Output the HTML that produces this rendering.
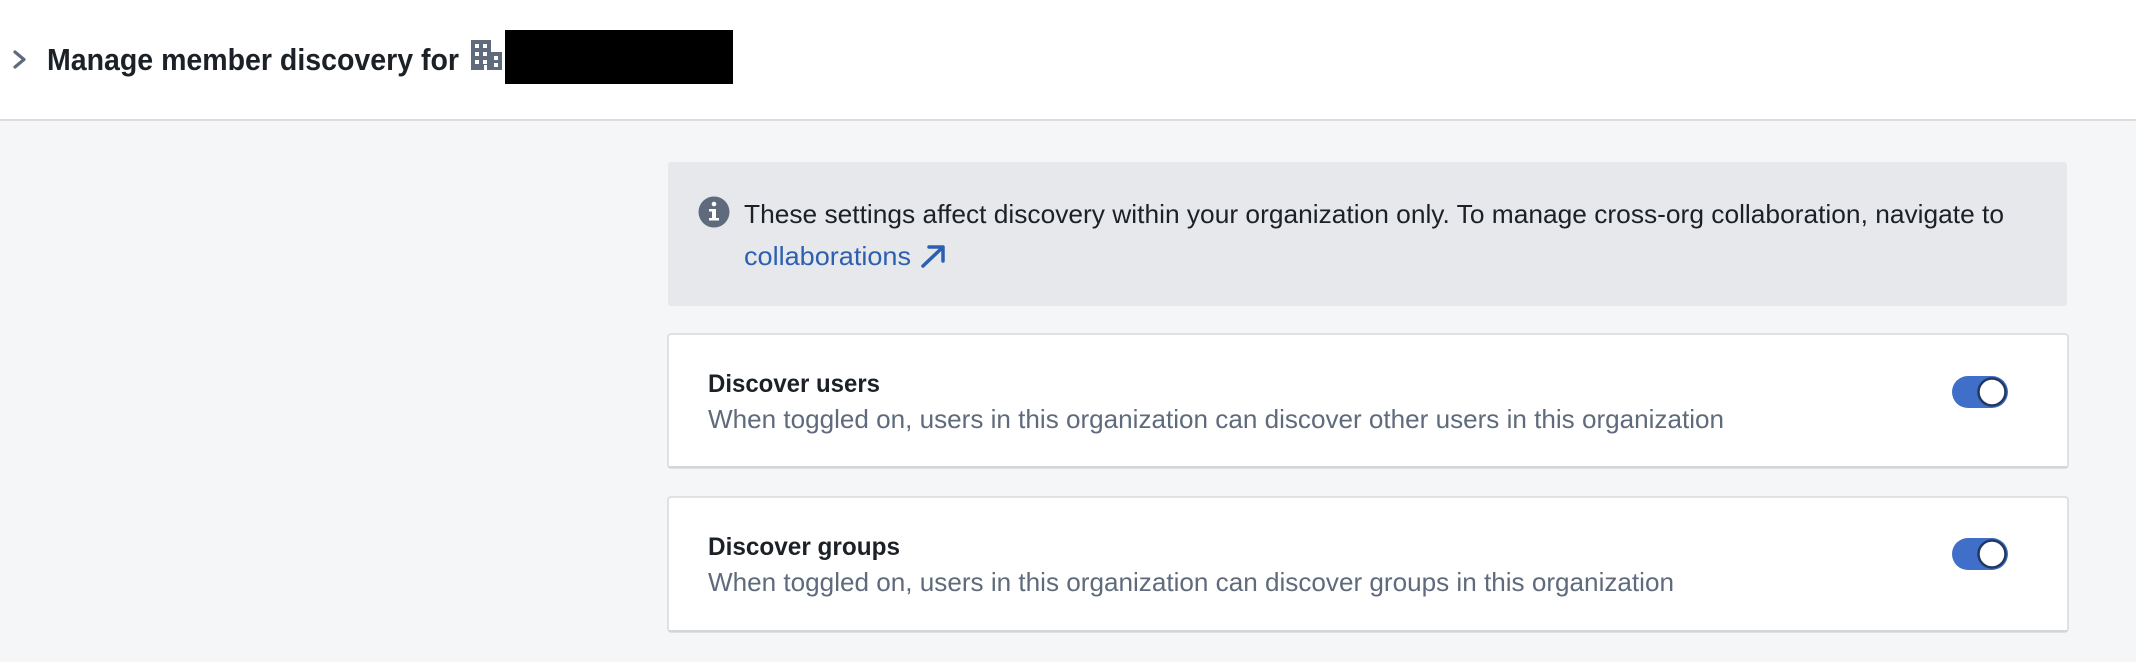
<!DOCTYPE html>
<html><head><meta charset="utf-8"><style>
html,body{margin:0;padding:0;width:2136px;height:662px;overflow:hidden;background:#f5f6f8}
svg{display:block}
text{font-family:"Liberation Sans",sans-serif}
</style></head><body>
<svg width="2136" height="662" viewBox="0 0 2136 662" xmlns="http://www.w3.org/2000/svg">
<rect x="0" y="0" width="2136" height="662" fill="#f5f6f8"/>
<rect x="0" y="0" width="2136" height="120" fill="#ffffff"/>
<rect x="0" y="119" width="2136" height="2" fill="#dcdcdf"/>
<!-- chevron -->
<path d="M15 52 L24 59.5 L15 67" fill="none" stroke="#5f6b7c" stroke-width="3.2" stroke-linecap="round" stroke-linejoin="round"/>
<text x="47" y="70" font-size="31" font-weight="bold" fill="#1c2127" textLength="412" lengthAdjust="spacingAndGlyphs">Manage member discovery for</text>
<!-- building icon -->
<g fill="#5f6b7c">
<path d="M471 40 H491 V52 H502 V70 H471 Z"/>
</g>
<g fill="#ffffff">
<rect x="475" y="44" width="4" height="4"/><rect x="483" y="44" width="4" height="4"/>
<rect x="475" y="52" width="4" height="4"/><rect x="483" y="52" width="4" height="4"/>
<rect x="475" y="60" width="4" height="4"/><rect x="483" y="60" width="4" height="4"/>
<rect x="494" y="56" width="4" height="4"/><rect x="494" y="63" width="4" height="4"/>
<rect x="484" y="65" width="3" height="5"/>
</g>
<rect x="505" y="30" width="228" height="54" fill="#000"/>
<!-- info box -->
<rect x="668" y="162" width="1399" height="144" rx="3" fill="#e7e8eb"/>
<circle cx="714" cy="212" r="15.5" fill="#5f6b7c"/>
<rect x="712" y="209" width="4" height="11" fill="#fff"/>
<rect x="709" y="209" width="7" height="2.5" fill="#fff"/>
<rect x="709" y="218" width="10" height="2.5" fill="#fff"/>
<circle cx="714" cy="204" r="2.3" fill="#fff"/>
<text x="744" y="223" font-size="26" fill="#1c2127" textLength="1260" lengthAdjust="spacingAndGlyphs">These settings affect discovery within your organization only. To manage cross-org collaboration, navigate to</text>
<text x="744" y="265" font-size="26" fill="#2d5fb0" textLength="167" lengthAdjust="spacingAndGlyphs">collaborations</text>
<path d="M923 266 L943 247 M929 247 H943 V261" fill="none" stroke="#2d5fb0" stroke-width="3.5" stroke-linecap="round" stroke-linejoin="round"/>
<!-- card 1 -->
<rect x="668" y="334" width="1400" height="134" rx="3" fill="#fff" stroke="#d8d9dc" stroke-width="1.5"/>
<rect x="669" y="466" width="1398" height="2" fill="#d3d5d9"/>
<text x="708" y="392" font-size="25" font-weight="bold" fill="#1c2127" textLength="172" lengthAdjust="spacingAndGlyphs">Discover users</text>
<text x="708" y="428" font-size="26" fill="#5f6b7c" textLength="1016" lengthAdjust="spacingAndGlyphs">When toggled on, users in this organization can discover other users in this organization</text>
<rect x="1952" y="376" width="56" height="32" rx="16" fill="#3f6fc9"/>
<circle cx="1992" cy="392" r="13.5" fill="#fff" stroke="#22385f" stroke-width="2.5"/>
<!-- card 2 -->
<rect x="668" y="497" width="1400" height="135" rx="3" fill="#fff" stroke="#d8d9dc" stroke-width="1.5"/>
<rect x="669" y="630" width="1398" height="2" fill="#d3d5d9"/>
<text x="708" y="555" font-size="25" font-weight="bold" fill="#1c2127" textLength="192" lengthAdjust="spacingAndGlyphs">Discover groups</text>
<text x="708" y="591" font-size="26" fill="#5f6b7c" textLength="966" lengthAdjust="spacingAndGlyphs">When toggled on, users in this organization can discover groups in this organization</text>
<rect x="1952" y="538" width="56" height="32" rx="16" fill="#3f6fc9"/>
<circle cx="1992" cy="554" r="13.5" fill="#fff" stroke="#22385f" stroke-width="2.5"/>
</svg>
</body></html>
